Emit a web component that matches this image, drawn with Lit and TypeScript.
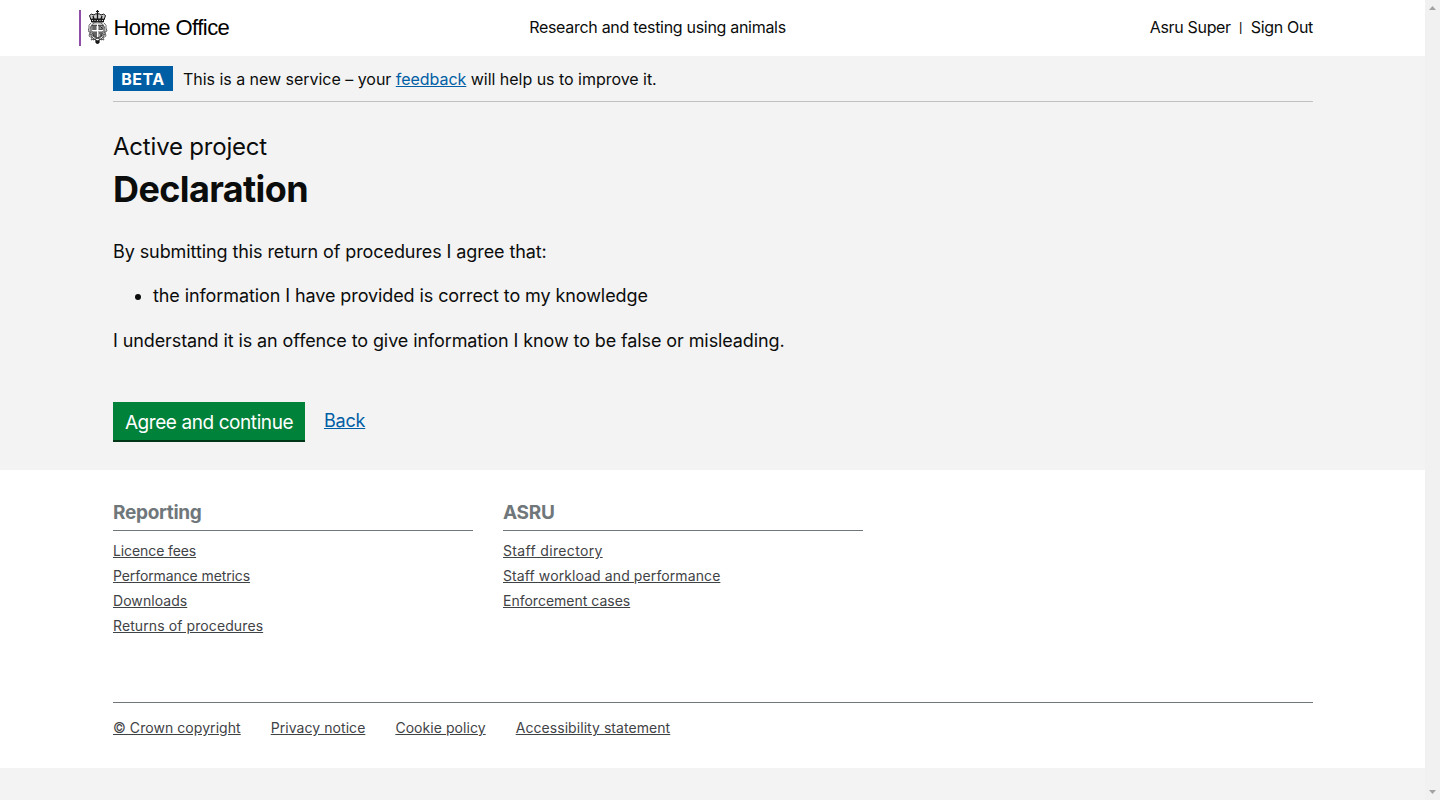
import { LitElement, html, css } from "lit";
import { customElement } from "lit/decorators.js";

@customElement("app-root")
export class AppRoot extends LitElement {
  static styles = css`
    :host { display: block; height: 800px; overflow: hidden; background: #f3f3f3; color: #0b0c0c; font-family: Inter, sans-serif; }
    * { box-sizing: border-box; }
    a { color: inherit; text-decoration: underline; }
    .frame { display: grid; grid-template-columns: 1fr 15px; height: 800px; }
    .bar { background: #f1f1f1; display: flex; flex-direction: column; justify-content: space-between; align-items: flex-start; padding: 6px 0 6px 4px; }
    .bar svg { display: block; }
    .wrap { width: 1200px; margin: 0 112px 0 113px; }
    header { background: #fff; height: 56px; }
    .head { display: grid; grid-template-columns: 400px 1fr 400px; align-items: start; }
    .brand { display: flex; margin-left: -34px; margin-top: 10px; height: 36px; border-left: 2px solid #8f4fa8; font-family: "Liberation Sans", Arial, sans-serif; font-size: 22px; line-height: 35px; letter-spacing: -0.55px; color: #000; }
    .crest { display: block; margin-left: 7px; margin-right: 5.500px; }
    .title { text-align: center; font-size: 16px; line-height: 20px; padding-top: 17px; margin-left: -111px; letter-spacing: -0.3px; }
    .user { display: flex; justify-content: flex-end; align-items: flex-start; font-size: 16px; line-height: 20px; padding-top: 17px; letter-spacing: -0.33px; }
    .pipe { width: 20px; text-align: center; font-family: "Liberation Sans", Arial, sans-serif; font-size: 13px; line-height: 20px; letter-spacing: 0; }
    .phase { display: flex; height: 46px; padding-top: 10px; border-bottom: 1px solid #bfc1c3; font-size: 16px; line-height: 26px; letter-spacing: -0.03px; }
    .tag { width: 60px; height: 25px; background: #005ea5; color: #fff; font-weight: 700; text-align: center; letter-spacing: 0.5px; margin-right: 10px; }
    .blue { color: #005ea5; }
    .main { height: 368px; font-size: 18px; line-height: 25px; letter-spacing: -0.09px; }
    h2 { font-weight: 400; font-size: 24px; line-height: 30px; margin: 0; padding-top: 30px; letter-spacing: -0.2px; }
    h1 { font-weight: 700; font-size: 36px; line-height: 40px; margin: 7px 0 30px; letter-spacing: -0.62px; }
    p { margin: 0; }
    ul { margin: 19px 0 20px; padding-left: 40px; }
    .last { letter-spacing: -0.1px; }
    .actions { display: flex; margin-top: 49px; }
    .btn { width: 192px; height: 40px; background: #00823b; border-bottom: 2px solid #003618; color: #fff; font-size: 19px; line-height: 41px; text-align: center; margin-right: 19px; letter-spacing: -0.42px; }
    .back { line-height: 38px; letter-spacing: -0.2px; }
    footer { background: #fff; height: 298px; color: #3f4346; font-size: 14px; line-height: 25px; letter-spacing: 0.06px; }
    .cols { display: flex; gap: 30px; height: 232px; padding-top: 30px; }
    .col { width: 360px; }
    h3 { margin: 0 0 7px; height: 31px; border-bottom: 1px solid #6f777b; color: #6f777b; font-size: 19px; line-height: 25px; letter-spacing: -0.3px; }
    .col a { display: table; }
    .tight { letter-spacing: -0.1px; }
    .even { letter-spacing: 0; }
    .loose { letter-spacing: 0.1px; }
    .wide { letter-spacing: 0.34px; }
    .legal { border-top: 1px solid #6f777b; display: flex; gap: 30px; padding-top: 12px; }
  `;

  render() {
    return html`<div class="frame"><div>
      <header><div class="wrap head">
        <div class="brand">
          <svg class="crest" width="20" height="36" viewBox="0 0 20 36" fill="none" stroke="#111" stroke-width="1">
            <path d="M9.500 0v4M8 1.500h3" stroke-width="1.200"/>
            <path d="M3 10L1.500 5.500Q3 3 6 5q2-2 3.500-1Q11 3 13 5q3-2 4.500.500L16 10Z" fill="#ccc"/>
            <path d="M5 6l1 3M9.500 4v5M14 6l-1 3" stroke-width="1.300"/>
            <path d="M3.500 9h12v3h-12z" fill="#222"/><path d="M4 10.500h11" stroke="#ddd" stroke-dasharray="1 1.500"/>
            <ellipse cx="9.500" cy="20" rx="7.500" ry="8" fill="#c7c7c7" stroke="#444" stroke-width=".8"/>
            <path d="M4 15.500h11v7q-1 4.500-5.500 5.500Q5 27 4 22.500Z" fill="#aaa" stroke="#333" stroke-width=".8"/>
            <path d="M9.500 14v13M4 20.500h11" stroke="#fff"/>
            <path d="M5 17h3M5 19h3M11 17q2-1 3 1t-3 1M6 22v4M8 22v5M11 23h3M12 25h2" stroke-width=".9"/>
            <path d="M3 13Q0 15 1 18l-1 3 2 1-1 4 3 2-1 2 3-1M16 13q3 2 2 5l1 3-2 1 1 4-3 2 1 2-3-1" stroke="#555" stroke-width=".9"/>
            <path d="M2 24q2 5 7.500 7 5.500-2 7.500-7M5 30l4.500-2 4.500 2M7 29l2.500 5 2.500-5" stroke="#444"/>
            <path d="M8 31h3v2H8z" fill="#222"/>
          </svg><span>Home Office</span>
        </div>
        <div class="title">Research and testing using animals</div>
        <div class="user"><span>Asru Super</span><span class="pipe">|</span><span>Sign Out</span></div>
      </div></header>
      <div class="wrap phase"><div class="tag">BETA</div><div>This is a new service – your <a class="blue">feedback</a> will help us to improve it.</div></div>
      <div class="wrap main">
        <h2>Active project</h2><h1>Declaration</h1>
        <p>By submitting this return of procedures I agree that:</p>
        <ul><li>the information I have provided is correct to my knowledge</li></ul>
        <p class="last">I understand it is an offence to give information I know to be false or misleading.</p>
        <div class="actions"><div class="btn">Agree and continue</div><a class="blue back">Back</a></div>
      </div>
      <footer>
        <div class="wrap cols">
          <div class="col"><h3>Reporting</h3><a class="tight">Licence fees</a><a class="tight">Performance metrics</a><a>Downloads</a><a class="loose">Returns of procedures</a></div>
          <div class="col"><h3>ASRU</h3><a class="wide">Staff directory</a><a class="loose">Staff workload and performance</a><a class="even">Enforcement cases</a></div>
        </div>
        <div class="wrap legal"><a>© Crown copyright</a><a>Privacy notice</a><a>Cookie policy</a><a>Accessibility statement</a></div>
      </footer>
    </div><div class="bar">
      <svg width="7" height="4" viewBox="0 0 7 4"><path d="M0 4L3.500 0 7 4Z" fill="#a3a3a3"/></svg>
      <svg width="7" height="4" viewBox="0 0 7 4"><path d="M0 0l3.500 4L7 0Z" fill="#a3a3a3"/></svg>
    </div></div>`;
  }
}
